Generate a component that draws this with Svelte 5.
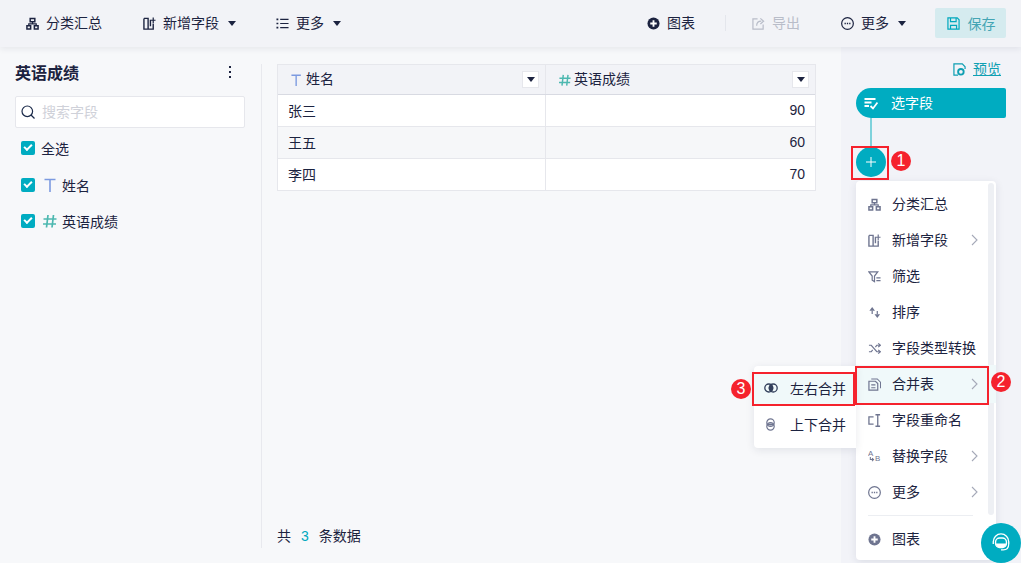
<script>
  const rows = [['张三', 90], ['王五', 60], ['李四', 70]];
  const menu = [
    { k: 'tree', t: '分类汇总' },
    { k: 'add', t: '新增字段', arrow: true },
    { k: 'filter', t: '筛选' },
    { k: 'sort', t: '排序' },
    { k: 'shuffle', t: '字段类型转换' },
    { k: 'merge', t: '合并表', arrow: true, active: true },
    { k: 'rename', t: '字段重命名' },
    { k: 'replace', t: '替换字段', arrow: true },
    { k: 'more', t: '更多', arrow: true }
  ];
</script>

{#snippet icon(k)}
  <svg class="ic" viewBox="0 0 14 14" fill="none" stroke="currentColor" stroke-width="1.3">
    {#if k === 'tree'}
      <path d="M4.500 1.500h5v3.500h-5zM1 9.500h4v3.500H1zM9 9.500h4v3.500H9z" stroke-width="1.600"/>
      <path d="M7 5v2.500M3 9.500v-2h8v2" stroke-width="1.300"/>
    {:else if k === 'add'}
      <path d="M1 1.500v11.500h10V7M1 1.500h4.500V13M8 3v7" stroke-width="1.500"/><path d="M11 .5v6M8.500 3.500h5" stroke-width="1.300"/>
    {:else if k === 'list'}
      <path d="M4.500 2.500h9M4.500 7h9M4.500 11.500h9"/><path d="M.5 2.500h2M.5 7h2M.5 11.500h2" stroke-width="1.800"/>
    {:else if k === 'filter'}
      <path d="M1 2h9.500L7 6.500V12.500L4.500 11V6.500z"/><path d="M9 8.500h4.500M9 11.500h4.500"/>
    {:else if k === 'sort'}
      <path d="M4.500 1 1.500 5h6zM10 13 7 9h6z" fill="currentColor" stroke="none"/><path d="M4.500 5v3.500M10 5.500V9"/>
    {:else if k === 'shuffle'}
      <path d="M1 3.500h2.500l6 7H13M1 10.500h2.500l1.500-2M8 5.500l1.500-2H13"/><path d="M11 1.500 13.300 3.500 11 5.500M11 8.500l2.300 2-2.300 2"/>
    {:else if k === 'merge'}
      <path d="M1 3.500h7l2.500 2.500V13H1zM3.500 7.500h4.500M3.500 10.500h4.500"/><path d="M3.500 1H10l3.500 3.500v6.500" stroke-width="1.100"/>
    {:else if k === 'rename'}
      <path d="M6 3H1v8h5M8 .8h5M8 13.200h5M10.500 .8v12.400" stroke-width="1.400"/>
    {:else if k === 'replace'}
      <text x="0" y="6" class="ab">A</text><text x="7.500" y="12" class="ab">B</text><path d="M2.500 7.500v2.800h3.500M4.300 8.700 6 10.300 4.300 11.900" stroke-width="1.100"/>
    {:else if k === 'more'}
      <circle cx="7" cy="7" r="6.300"/><path d="M3.800 7h1.400M6.300 7h1.400M8.800 7h1.400" stroke-width="1.400"/>
    {:else if k === 'chart'}
      <circle cx="7" cy="7" r="6.500" fill="currentColor" stroke="none"/><path d="M3.500 7h7M7 3.500v7" stroke="#fff" stroke-width="2"/>
    {:else if k === 'export'}
      <path d="M6 2H1v11h11V8"/><path d="M5 9.500c0-3 2-5 5-5M9 1.500l3.500 3-3.500 3"/>
    {:else if k === 'save'}
      <path d="M1 1h10l2 2v10H1zM3.800 1v4h6V1M3.800 13V9h6.500v4" stroke-width="1.300"/>
    {:else if k === 'preview'}
      <path d="M5.500 13H1V1h9l3 3v2.500"/><circle cx="8.500" cy="9.500" r="3" stroke-width="2"/>
    {:else if k === 'pick'}
      <path d="M.5 3h11M.5 6.500h7M.5 10h4.500" stroke-width="1.800"/><path d="M6.500 10l2.500 2.500 4.500-6" stroke-width="1.800"/>
    {:else if k === 'lr'}
      <circle cx="4.800" cy="7" r="4"/><circle cx="9.200" cy="7" r="4"/><path d="M7 3.800a4 4 0 0 1 0 6.400 4 4 0 0 1 0-6.400z" fill="currentColor"/>
    {:else if k === 'ud'}
      <rect x="3" y="1" width="8" height="8" rx="4"/><rect x="3" y="5" width="8" height="8" rx="4"/><path d="M3.500 6h7v2h-7z" fill="currentColor" stroke="none"/>
    {:else if k === 'T'}
      <path d="M.5 1.500h11M6 1.500V14" stroke-width="1.600"/>
    {:else if k === 'H'}
      <path d="M5 1 3.500 13.500M10.500 1 9 13.500M.5 5h13M0 10h13" stroke-width="1.700"/>
    {/if}
  </svg>
{/snippet}

{#snippet caret()}<i class="caret"></i>{/snippet}

<div class="page">
  <header class="top">
    <div class="group left">
      <span class="tool t1">{@render icon('tree')}分类汇总</span>
      <span class="tool t2">{@render icon('add')}新增字段{@render caret()}</span>
      <span class="tool t3">{@render icon('list')}更多{@render caret()}</span>
    </div>
    <div class="group right">
      <span class="tool">{@render icon('chart')}图表</span>
      <span class="divider"></span>
      <span class="tool off">{@render icon('export')}导出</span>
      <span class="tool t4">{@render icon('more')}更多{@render caret()}</span>
      <button class="save">{@render icon('save')}<span>保存</span></button>
    </div>
  </header>

  <div class="body">
    <aside class="side">
      <div class="side-in">
        <div class="title"><h2>英语成绩</h2><span class="kebab"><i></i><i></i><i></i></span></div>
        <div class="search">
          <svg viewBox="0 0 14 14" fill="none" stroke="#1b2a4a" stroke-width="1.200"><circle cx="6.300" cy="6.300" r="5.300"/><path d="M10 10l3.500 3.500"/></svg>
          <span>搜索字段</span>
        </div>
        <div class="check first"><span class="box"></span><span class="txt">全选</span></div>
        <div class="check"><span class="box"></span><span class="ty t">{@render icon('T')}</span><span class="txt">姓名</span></div>
        <div class="check"><span class="box"></span><span class="ty h">{@render icon('H')}</span><span class="txt">英语成绩</span></div>
      </div>
    </aside>

    <main class="main">
      <div class="table">
        <div class="row head">
          <div class="c1"><span class="ty t">{@render icon('T')}</span><span class="txt">姓名</span><span class="drop">{@render caret()}</span></div>
          <div class="c2"><span class="ty h">{@render icon('H')}</span><span class="txt">英语成绩</span><span class="drop">{@render caret()}</span></div>
        </div>
        {#each rows as r, i}
          <div class="row" class:alt={i === 1}>
            <div class="c1"><span class="txt">{r[0]}</span></div>
            <div class="c2 num">{r[1]}</div>
          </div>
        {/each}
      </div>
      <div class="foot">共<em>3</em>条数据</div>
    </main>

    <section class="flow">
      <a class="preview" href="#top">{@render icon('preview')}<u>预览</u></a>
      <div class="node">{@render icon('pick')}<span>选字段</span></div>
      <div class="line"></div>
      <div class="plus"><svg viewBox="0 0 10 10" stroke="#fff" stroke-width="1"><path d="M5 0v10M0 5h10"/></svg></div>

      <div class="redbox rb1"></div>
      <span class="badge b1">1</span>

      <div class="menu">
        <span class="scroll"></span>
        {#each menu as m}
          <div class="mi" class:active={m.active}>
            <span class="mic">{@render icon(m.k)}</span>{m.t}
            {#if m.arrow}
              <svg class="arr" viewBox="0 0 7 12" fill="none" stroke="#a5a9b8" stroke-width="1.100"><path d="M1 1l5 5-5 5"/></svg>
            {/if}
          </div>
        {/each}
        <div class="sep"></div>
        <div class="mi"><span class="mic">{@render icon('chart')}</span>图表</div>
      </div>

      <div class="sub">
        <div class="si on"><span class="dark">{@render icon('lr')}</span>左右合并</div>
        <div class="si"><span class="mic">{@render icon('ud')}</span>上下合并</div>
      </div>

      <div class="redbox rb2"></div>
      <div class="redbox rb3"></div>
      <span class="badge b2">2</span>
      <span class="badge b3">3</span>
    </section>
  </div>

  <div class="chat">
    <svg viewBox="0 0 22 22" fill="none" stroke="#fff" stroke-width="1.500">
      <path d="M2.500 12V9.500a8.500 8.500 0 0 1 17 0V12"/>
      <rect x="5" y="5.500" width="12" height="10.500" rx="4.500"/>
      <path d="M5.500 11.500h11v.5a3.500 3.500 0 0 1-3.500 3.500H9A3.500 3.500 0 0 1 5.500 12z" fill="#fff" stroke="none"/>
      <path d="M19.500 12c0 4-2 6.500-6 6.500H11" stroke-width="1.300"/>
    </svg>
  </div>
</div>

<style>
  :global(html), :global(body) { margin: 0; overflow: hidden; }
  :global(body) { font-family: "Liberation Sans", "Noto Sans CJK SC", sans-serif; font-size: 14px; color: #1c2340; }
  .page { position: relative; width: 1021px; height: 563px; overflow: hidden; background: #f7f8fa; }
  .ic { width: 14px; height: 14px; flex: none; }
  .ab { font: 8.500px "Liberation Sans", sans-serif; fill: currentColor; stroke: none; }
  .txt { display: block; padding-bottom: 1px; }

  .top { position: relative; z-index: 2; height: 47px; box-sizing: border-box; padding: 8px 15px 9px 26px; display: flex; justify-content: space-between; align-items: center; background: #f2f3f7; box-shadow: 0 2px 6px rgba(30, 40, 70, .08); }
  .group { display: flex; align-items: center; }
  .tool { display: inline-flex; align-items: center; gap: 7px; line-height: 20px; white-space: nowrap; }
  .tool .ic { width: 13px; height: 13px; }
  .t1 { margin-right: 41px; }
  .t2 { margin-right: 40px; }
  .caret { width: 0; height: 0; border: 4px solid transparent; border-top: 5px solid #1c2340; border-bottom: 0; margin-left: 2px; flex: none; display: block; }
  .divider { width: 1px; height: 16px; background: #e4e6ec; margin: 0 26px 0 30px; }
  .off { color: #b9bdc9; margin-right: 41px; }
  .t4 { margin-right: 29px; }
  .save { width: 71px; height: 30px; border: 0; border-radius: 2px; background: #d5ebef; color: #00a8bd; font: inherit; display: flex; align-items: center; justify-content: center; gap: 8px; padding: 0 0 0 1px; }
  .save .ic { width: 13px; height: 13px; }
  .save span { color: #44a5b4; }

  .body { display: flex; height: 516px; }
  .side { width: 262px; flex: none; box-sizing: border-box; padding: 17px 0 15px; }
  .side-in { height: 100%; box-sizing: border-box; padding: 0 16px 0 15px; border-right: 1px solid #e8e9ee; }
  .title { display: flex; justify-content: space-between; align-items: center; height: 20px; }
  h2 { margin: 0; font-size: 16px; font-weight: 700; line-height: 20px; }
  .kebab { display: flex; flex-direction: column; gap: 3px; padding-right: 14px; margin-top: -4px; }
  .kebab i { width: 2px; height: 2px; background: #1c2340; display: block; }
  .search { margin-top: 12px; height: 32px; box-sizing: border-box; background: #fff; border: 1px solid #e6e7ec; border-radius: 2px; display: flex; align-items: center; padding-left: 5px; gap: 7px; color: #cfd1d9; }
  .search svg { width: 14px; height: 14px; }
  .search span { padding-bottom: 2px; }
  .check { display: flex; align-items: center; height: 20px; margin-top: 16px; padding-left: 6px; }
  .check.first { margin-top: 10px; margin-bottom: 17px; }
  .check.first + .check { margin-top: 0; }
  .box { position: relative; width: 14px; height: 14px; border-radius: 2px; background: #00acc1; margin-right: 6px; flex: none; }
  .box::after { content: ""; position: absolute; left: 3px; top: 3px; width: 8px; height: 5px; border-left: 2px solid #fff; border-bottom: 2px solid #fff; transform: rotate(-45deg); box-sizing: border-box; }
  .ty { display: flex; flex: none; }
  .ty.t { color: #7c9ae0; }
  .ty.h { color: #4db8b0; }
  .check .ty { width: 19px; margin-left: 2px; }
  .check .ty.t { margin-left: 3px; width: 18px; }
  .head .ty { width: 15px; }
  .head .ty .ic { width: 12px; height: 14px; }
  .head .txt { padding-bottom: 3px; }

  .main { flex: none; width: 579px; box-sizing: border-box; padding: 17px 25px 0 15px; display: flex; flex-direction: column; height: 100%; }
  .table { border: 1px solid #e6e7ec; background: #fff; }
  .row { display: flex; height: 31px; border-top: 1px solid #e6e7ec; }
  .row.alt { background: #f6f7f9; }
  .row.head { height: 29px; border-top: 0; background: #f2f3f7; border-bottom: 1px solid #d8dae2; }
  .head + .row { border-top: 0; }
  .c1, .c2 { display: flex; align-items: center; box-sizing: border-box; }
  .c1 { width: 268px; flex: none; padding-left: 10px; border-right: 1px solid #e6e7ec; }
  .c2 { flex: 1; padding-left: 13px; }
  .head .c1 { padding-left: 13px; }
  .drop { margin-left: auto; margin-right: 6px; width: 17px; height: 17px; background: #fff; border: 1px solid #e6e7ec; box-sizing: border-box; display: flex; align-items: center; justify-content: center; }
  .drop .caret { margin: 0; }
  .num { justify-content: flex-end; padding-right: 10px; padding-bottom: 1px; }
  .foot { margin-top: auto; height: 20px; line-height: 20px; margin-bottom: 17px; }
  .foot em { font-style: normal; color: #00a8bd; margin: 0 10px; }

  .flow { position: relative; flex: 1; background: #f2f3f8; }
  .preview { position: absolute; right: 20px; top: 12px; display: flex; align-items: center; gap: 7px; color: #0e9fb2; line-height: 20px; text-decoration: none; }
  .preview .ic { width: 13px; height: 13px; }
  .node { position: absolute; left: 15px; top: 41px; width: 150px; height: 30px; background: #00acc1; border-radius: 15px 2px 2px 15px; color: #fff; display: flex; align-items: center; padding-left: 8px; box-sizing: border-box; gap: 13px; }
  .node span { padding-bottom: 2px; }
  .line { position: absolute; left: 29px; top: 71px; width: 2px; height: 30px; background: #7fd2dc; }
  .plus { position: absolute; left: 15px; top: 100px; width: 30px; height: 30px; border-radius: 50%; background: #00acc1; display: flex; align-items: center; justify-content: center; }
  .plus svg { width: 10px; height: 10px; }
  .redbox { position: absolute; border: 2px solid #f5222d; box-sizing: border-box; z-index: 4; }
  .rb1 { left: 10px; top: 99px; width: 38px; height: 34px; }
  .rb2 { left: 14px; top: 319px; width: 134px; height: 39px; }
  .rb3 { left: -89px; top: 325px; width: 103px; height: 34px; }
  .badge { position: absolute; width: 20px; height: 20px; border-radius: 50%; background: #f5222d; color: #fff; font-size: 16px; line-height: 20px; text-align: center; z-index: 4; }
  .b1 { left: 50px; top: 104px; }
  .b2 { left: 150px; top: 325px; }
  .b3 { left: -110px; top: 332px; }

  .menu { position: absolute; left: 15px; top: 134px; width: 140px; height: 379px; background: #fff; border-radius: 4px; box-shadow: 0 2px 8px rgba(30, 40, 70, .1); box-sizing: border-box; padding-top: 5px; }
  .scroll { position: absolute; right: 2px; top: 2px; width: 6px; height: 332px; border-radius: 3px; background: #eef0f4; }
  .mi { position: relative; height: 36px; display: flex; align-items: center; padding-left: 12px; line-height: 20px; white-space: nowrap; }
  .mi.active { background: #f0f9fa; height: 38px; margin: -1px 0; }
  .mic { color: #6f7590; display: flex; width: 24px; flex: none; }
  .mic .ic { width: 13px; height: 13px; }
  .arr { position: absolute; left: 115px; top: 50%; width: 7px; height: 12px; margin-top: -6px; }
  .sep { height: 1px; background: #eceef2; margin: 5px 23px 5px 12px; }

  .sub { position: absolute; left: -87px; top: 319px; width: 102px; height: 82px; background: #fff; border-radius: 4px 0 0 4px; box-shadow: 0 2px 8px rgba(30, 40, 70, .1); box-sizing: border-box; padding-top: 6px; z-index: 3; }
  .si { height: 36px; display: flex; align-items: center; padding-left: 10px; white-space: nowrap; }
  .si .mic, .si .dark { display: flex; width: 26px; flex: none; }
  .si.on { background: #f0f9fa; height: 32px; margin-bottom: 2px; }
  .dark { color: #33405c; }

  .chat { position: absolute; z-index: 5; left: 981px; top: 523px; width: 40px; height: 40px; border-radius: 50%; background: #00acc1; display: flex; align-items: center; justify-content: center; }
  .chat svg { width: 20px; height: 20px; }
</style>
